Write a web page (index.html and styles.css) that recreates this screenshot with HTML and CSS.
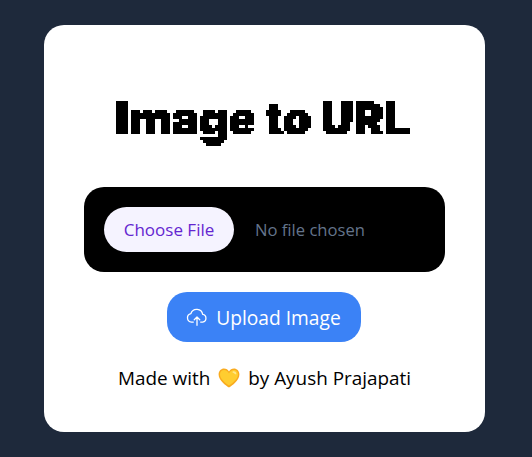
FILE: index.html
```html
<!DOCTYPE html>
<html lang="en">
<head>
<meta charset="utf-8">
<title>Image to URL</title>
<link rel="stylesheet" href="styles.css">
</head>
<body>
<svg class="defs" aria-hidden="true">
  <filter id="pixelate" x="0" y="0" width="100%" height="100%" color-interpolation-filters="sRGB">
    <feFlood x="1" y="1" width="1" height="1"/>
    <feComposite width="3" height="3"/>
    <feTile result="grid"/>
    <feComposite in="SourceGraphic" in2="grid" operator="in"/>
    <feMorphology operator="dilate" radius="1"/>
    <feComponentTransfer>
      <feFuncA type="discrete" tableValues="0 1"/>
    </feComponentTransfer>
  </filter>
</svg>
<main class="card">
  <h1 class="title">Image to URL</h1>
  <div class="file-box">
    <span class="file-button">Choose File</span>
    <span class="file-name">No file chosen</span>
  </div>
  <button class="upload" type="button">
    <svg class="cloud" viewBox="0 0 24 24" fill="none" stroke="currentColor" stroke-width="1.4" stroke-linecap="round" stroke-linejoin="round">
      <path d="M8 17.500H6A4.700 4.700 0 0 1 5.400 8.200 6.600 6.600 0 0 1 18.200 9.200 4.200 4.200 0 0 1 18.200 17.500H16"/>
      <path d="M12 21V12M9 15 12 12 15 15"/>
    </svg>
    <span>Upload Image</span>
  </button>
  <p class="credit"><span>Made with</span>
    <svg class="heart" viewBox="0 0 22 20">
      <path fill="#f9ab1f" d="M11 19.600C8 17.400.6 12.600.6 6.400.6 2.900 3.200.6 6 .6c2.200 0 4 1.100 5 3 1-1.900 2.800-3 5-3 2.800 0 5.400 2.300 5.400 5.800 0 6.200-7.400 11-10.400 13.200z"/>
      <path fill="#ffcd30" d="M11 17.600C8.200 15.500 2 11.500 2 6.300 2 3.700 3.900 2 6 2c2.200 0 4 1.400 5 3.400C12 3.400 13.800 2 16 2c2.100 0 4 1.700 4 4.300 0 5.200-6.200 9.200-9 11.300z"/>
      <path fill="#ffe78a" d="M15 3.500c1.400-.5 3 .4 3.300 1.900.2 1-1 1.300-1.500.5-.4-.6-1-1-1.800-1.200-.8-.2-.8-1 0-1.200z"/>
    </svg>
    <span>by Ayush Prajapati</span></p>
</main>
</body>
</html>
```

FILE: styles.css
```css
* { box-sizing: border-box; }

html, body { height: 100%; }

body {
  margin: 0;
  background: #1e293b;
  display: flex;
  align-items: flex-start;
  justify-content: center;
  padding: 25px 3px 0 0;
  font-family: "Open Sans", "Noto Sans", sans-serif;
  overflow: hidden;
}

.defs {
  position: absolute;
  width: 0;
  height: 0;
}

.card {
  width: 441px;
  height: 407px;
  background: #fff;
  border-radius: 20px;
  padding: 58px 40px 0;
  display: flex;
  flex-direction: column;
  align-items: center;
}

.title {
  margin: 0 0 32px;
  height: 72px;
  padding: 0 7px 0 3px;
  line-height: 72px;
  font-family: "Inter", sans-serif;
  font-size: 45.5px;
  font-weight: 900;
  letter-spacing: 0;
  -webkit-text-stroke: 1.2px #000;
  color: #000;
  white-space: nowrap;
  filter: url(#pixelate);
}

.file-box {
  width: 361px;
  height: 85px;
  background: #000;
  border-radius: 20px;
  padding: 20px;
  display: flex;
  align-items: center;
}

.file-button {
  width: 130px;
  height: 45px;
  border-radius: 23px;
  background: #f5f3ff;
  color: #6425d0;
  font-size: 17px;
  font-weight: 500;
  display: flex;
  align-items: center;
  justify-content: center;
  margin-right: 21px;
}

.file-name {
  color: #64748b;
  font-size: 16.6px;
}

.upload {
  margin: 20px 0 0 -2px;
  width: 194px;
  height: 50px;
  border: 0;
  border-radius: 20px;
  background: #3b82f6;
  color: #fff;
  font-family: inherit;
  font-size: 19.2px;
  display: flex;
  align-items: center;
  justify-content: center;
  gap: 8px;
}

.cloud { width: 22px; height: 22px; flex: none; }

.credit {
  margin: 24px 0 0;
  color: #000;
  font-size: 18.9px;
  line-height: 24px;
  display: flex;
  align-items: center;
  gap: 8px;
  white-space: nowrap;
}

.heart { width: 22px; height: 20px; flex: none; }
```
